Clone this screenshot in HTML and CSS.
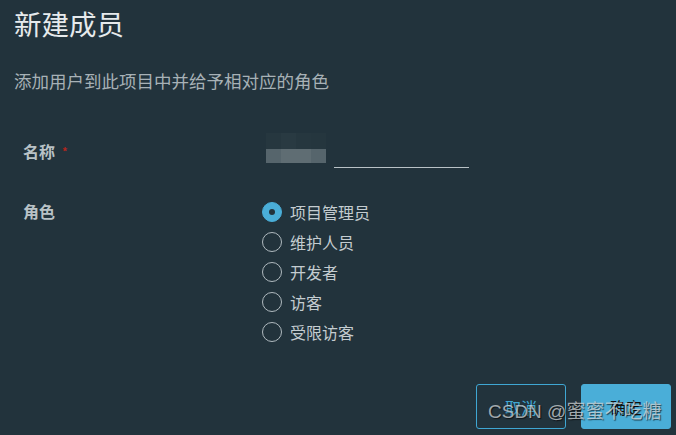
FILE: index.html
```html
<!DOCTYPE html>
<html lang="zh">
<head>
<meta charset="utf-8">
<link rel="stylesheet" href="styles.css">
</head>
<body>
<div class="dialog">
  <h1 class="title">新建成员</h1>
  <p class="subtitle">添加用户到此项目中并给予相对应的角色</p>
  <div class="form">
    <div class="row row-name">
      <div class="label">名称<span class="req">*</span></div>
      <div class="field">
        <div class="mosaic">
          <span class="c c1"></span><span class="c c2"></span><span class="c c1"></span><span class="c c3"></span>
          <span class="c c4"></span><span class="c c5"></span><span class="c c5"></span><span class="c c4"></span>
        </div>
        <div class="underline"></div>
      </div>
    </div>
    <div class="row row-role">
      <div class="label">角色</div>
      <div class="radios">
        <label class="radio checked"><span class="dot"></span>项目管理员</label>
        <label class="radio"><span class="dot"></span>维护人员</label>
        <label class="radio"><span class="dot"></span>开发者</label>
        <label class="radio"><span class="dot"></span>访客</label>
        <label class="radio"><span class="dot"></span>受限访客</label>
      </div>
    </div>
  </div>
  <div class="actions">
    <button class="btn btn-cancel">取消</button>
    <button class="btn btn-ok">确定</button>
  </div>
  <div class="watermark">CSDN @蜜蜜不吃糖</div>
</div>
</body>
</html>
```
FILE: styles.css
```css
html, body {
  margin: 0;
  padding: 0;
  background: #22333c;
  width: 676px;
  height: 435px;
  overflow: hidden;
  font-family: "Noto Sans CJK SC", "Noto Sans", sans-serif;
}
.dialog {
  position: relative;
  width: 676px;
  height: 435px;
  padding: 0 0 0 14px;
  box-sizing: border-box;
}
.title {
  margin: 0;
  padding-top: 4px;
  font-size: 27.5px;
  line-height: 38px;
  font-weight: 400;
  color: #e6eaec;
}
.subtitle {
  margin: 27px 0 0 0;
  font-size: 17.5px;
  line-height: 24px;
  color: #a7b1b6;
}
.form {
  margin-top: 47px;
  padding-left: 9px;
}
.row {
  display: flex;
  align-items: flex-start;
}
.label {
  width: 239px;
  font-size: 16px;
  font-weight: 700;
  color: #b9c2c6;
  line-height: 22px;
}
.req {
  color: #b3261e;
  font-size: 11px;
  margin-left: 7px;
  vertical-align: 2px;
}
.field {
  display: flex;
  align-items: flex-start;
  gap: 8px;
  padding-left: 4px;
}
.mosaic {
  display: grid;
  grid-template-columns: repeat(4, 15px);
  grid-template-rows: 16px 14px;
  margin-top: -7px;
}
.c1 { background: #26373f; }
.c2 { background: #293a42; }
.c3 { background: #25363e; }
.c4 { background: #56656c; }
.c5 { background: #5f6d73; }
.underline {
  width: 135px;
  height: 1px;
  background: #b9c2c6;
  margin-top: 27px;
}
.row-role {
  margin-top: 32px;
}
.radios {
  display: flex;
  flex-direction: column;
  gap: 10px;
  margin-top: 2px;
}
.radio {
  display: flex;
  align-items: center;
  gap: 8px;
  height: 20px;
  font-size: 16px;
  color: #c4ccd0;
}
.dot {
  width: 20px;
  height: 20px;
  box-sizing: border-box;
  border: 1.5px solid #b0babf;
  border-radius: 50%;
  display: flex;
  align-items: center;
  justify-content: center;
}
.checked .dot {
  background: #4aaed8;
  border-color: #4aaed8;
}
.checked .dot::after {
  content: "";
  width: 6px;
  height: 6px;
  border-radius: 50%;
  background: #22333c;
}
.actions {
  position: absolute;
  right: 5px;
  top: 384px;
  display: flex;
  gap: 15px;
}
.btn {
  width: 90px;
  height: 45px;
  border-radius: 3px;
  font-family: "Noto Sans CJK SC", sans-serif;
  font-size: 16px;
  padding: 0;
}
.btn-cancel {
  background: transparent;
  border: 1px solid #3fa7d3;
  color: #3fa7d3;
}
.btn-ok {
  background: #4aaed8;
  border: 1px solid #4aaed8;
  color: #111;
}
.watermark {
  position: absolute;
  left: 488px;
  top: 398px;
  font-family: "Liberation Sans", "Noto Sans CJK SC", sans-serif;
  font-size: 19px;
  line-height: 28px;
  color: rgba(215, 220, 222, 0.72);
  text-shadow: 1px 1px 1px rgba(0, 0, 0, 0.6);
  white-space: nowrap;
}
```
